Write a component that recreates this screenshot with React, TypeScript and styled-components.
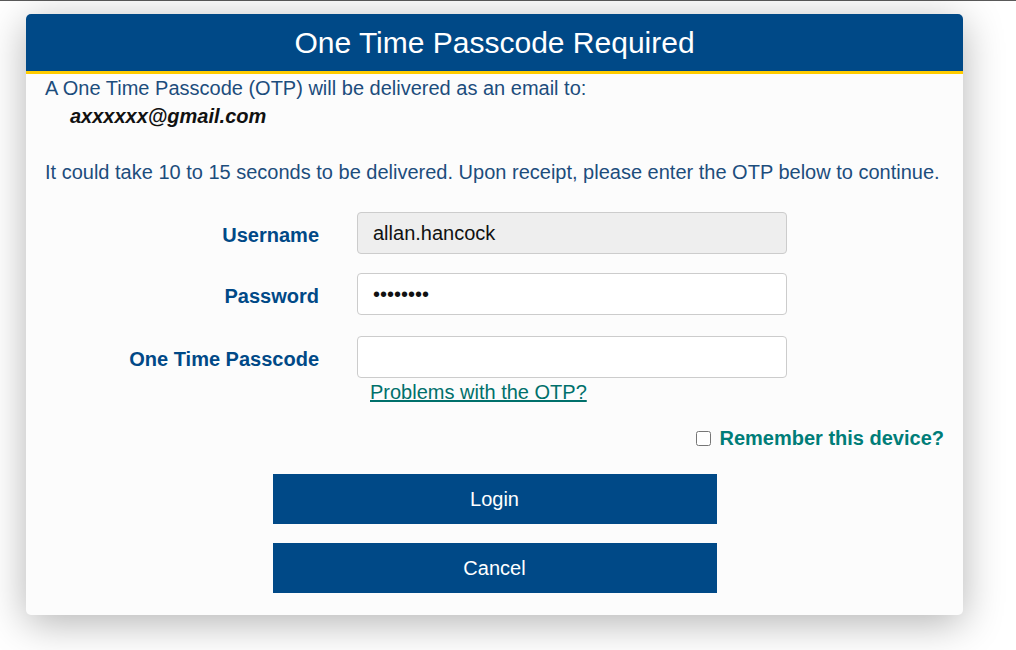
import React from 'react';
import styled, { createGlobalStyle } from 'styled-components';

const GlobalStyle = createGlobalStyle`
    html, body {
        margin: 0;
        padding: 0;
        background: #ffffff;
        font-family: "Liberation Sans", Arial, sans-serif;
    }
`;

const Page = styled.div`
    border-top: 1px solid #5a5a5a;
    box-sizing: border-box;
    min-height: 650px;
    padding: 13px 0 0 26px;
`;

const Card = styled.div`
    width: 937px;
    background: #fcfcfc;
    border-radius: 5px;
    box-shadow: 0 8px 40px rgba(0, 0, 0, 0.3);
    padding-bottom: 22px;
`;

const Header = styled.div`
    height: 57px;
    background: #004987;
    border-bottom: 3px solid #ffcc00;
    border-radius: 5px 5px 0 0;
    display: flex;
    align-items: center;
    justify-content: center;
    color: #ffffff;
    font-size: 30px;
`;

const Body = styled.div`
    padding: 0 19px;
    color: #1c4d7c;
    font-size: 20px;
    line-height: 28px;
`;

const Line = styled.div`
    white-space: nowrap;
`;

const Email = styled.div`
    margin-left: 25px;
    color: #111111;
    font-weight: bold;
    font-style: italic;
    margin-bottom: 28px;
`;

const Form = styled.div`
    display: grid;
    grid-template-columns: 274px 430px;
    column-gap: 38px;
    margin-top: 26px;
`;

const Label = styled.label`
    text-align: right;
    font-weight: bold;
    color: #004987;
    display: flex;
    align-items: center;
    justify-content: flex-end;
    height: 42px;
    padding-top: 2px;
`;

const Field = styled.div<{ $gap: number }>`
    margin-bottom: ${props => props.$gap}px;
`;

const Input = styled.input<{ $readOnly?: boolean }>`
    box-sizing: border-box;
    width: 430px;
    height: 42px;
    border: 1px solid #cccccc;
    border-radius: 4px;
    background: ${props => (props.$readOnly ? '#eeeeee' : '#ffffff')};
    font-family: "Liberation Sans", Arial, sans-serif;
    font-size: 20px;
    color: #111111;
    padding: 0 15px;
    outline: none;
`;

const HelpLink = styled.a`
    display: block;
    margin-left: 13px;
    color: #00706b;
    text-decoration: underline;
    cursor: pointer;
`;

const RememberRow = styled.div`
    display: flex;
    justify-content: flex-end;
    align-items: center;
    margin-top: 18px;
`;

const CheckBox = styled.input`
    width: 15px;
    height: 15px;
    margin: 0 8px 0 0;
`;

const RememberText = styled.label`
    color: #007d78;
    font-weight: bold;
`;

const Buttons = styled.div`
    display: flex;
    flex-direction: column;
    align-items: center;
    gap: 19px;
    margin-top: 22px;
`;

const Button = styled.button`
    width: 444px;
    height: 50px;
    border: none;
    background: #004987;
    color: #ffffff;
    font-family: "Liberation Sans", Arial, sans-serif;
    font-size: 20px;
    cursor: pointer;
`;

const App: React.FC = () => {
    return (
        <>
            <GlobalStyle />
            <Page>
                <Card>
                    <Header>One Time Passcode Required</Header>
                    <Body>
                        <Line>A One Time Passcode (OTP) will be delivered as an email to:</Line>
                        <Email>axxxxxx@gmail.com</Email>
                        <Line>
                            It could take 10 to 15 seconds to be delivered. Upon receipt, please enter the OTP below to
                            continue.
                        </Line>
                        <Form>
                            <Label>Username</Label>
                            <Field $gap={19}>
                                <Input $readOnly readOnly defaultValue="allan.hancock" />
                            </Field>
                            <Label>Password</Label>
                            <Field $gap={21}>
                                <Input type="password" defaultValue="password" />
                            </Field>
                            <Label>One Time Passcode</Label>
                            <Field $gap={0}>
                                <Input />
                                <HelpLink>Problems with the OTP?</HelpLink>
                            </Field>
                        </Form>
                        <RememberRow>
                            <CheckBox type="checkbox" id="remember" />
                            <RememberText htmlFor="remember">Remember this device?</RememberText>
                        </RememberRow>
                        <Buttons>
                            <Button>Login</Button>
                            <Button>Cancel</Button>
                        </Buttons>
                    </Body>
                </Card>
            </Page>
        </>
    );
};

export default App;
